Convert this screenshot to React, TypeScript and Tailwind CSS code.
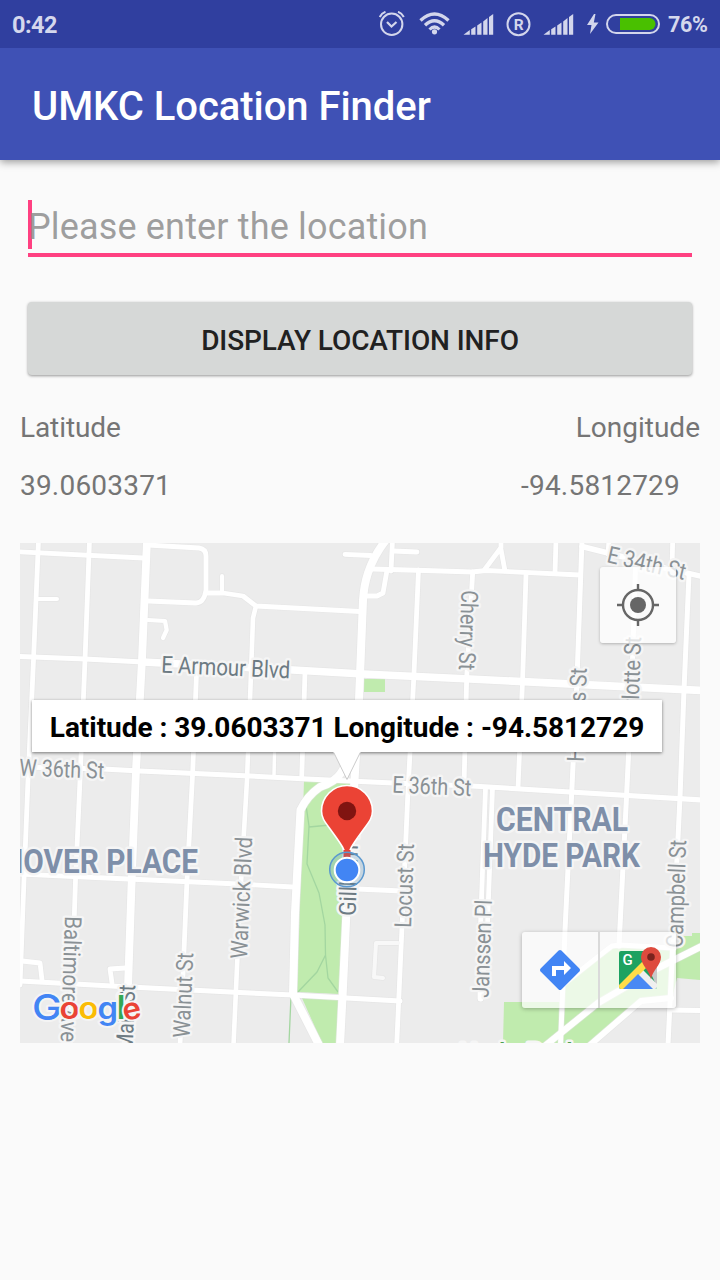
import React from "react";

type Street = { d: string; w?: number; color?: string };

const streets: Street[] = [
  { d: "M38.5 540 L33.5 660 L28 780 L24 880 L20 985" },
  { d: "M89.5 540 L85 660 L80 780 L75.5 880 L70 1045" },
  { d: "M196.7 668 L192.7 772 L187 880 L180 1045" },
  { d: "M256 606 L253 618 L250 700 L247 780 L240 900 L233.5 1045", w: 4.6 },
  { d: "M305 672 L301.7 778" },
  { d: "M275 730 L274 776", w: 3.5 },
  { d: "M392.5 540 L391 571" },
  { d: "M345 554.3 L371 555.5 M393 551 L417 552" },
  { d: "M372 569 L425 570.5 L472 572 L486 570.5 L580 575" },
  { d: "M386.7 572 L383 593 L377 596 L365 596" },
  { d: "M418.5 570 L414 673 L410 753 L407.7 797 L402 927 L396.7 1045" },
  { d: "M472.7 572 L466.7 677 L464 786" },
  { d: "M485.5 788 L480 940 L480 999 M492.5 788 L487.5 925 L481 999" },
  { d: "M526 575 L522.7 677 L518 788" },
  { d: "M556 540 L555 573" },
  { d: "M485 569 L500.7 548 L505 571 M501 540 L501 548" },
  { d: "M582 540 L576.7 687 L571.7 793 L565 930 L560.5 1045", w: 5 },
  { d: "M672.7 540 L672 568 M609 540 L608 554" },
  { d: "M635.7 560 L631.7 687 L626.7 793 L619 946", w: 5 },
  { d: "M689 574 L684 690 L680 797 L673 940 L668 1045", w: 5 },
  { d: "M582 546.5 L612 554 L665 568 L702 576.5", w: 5.5 },
  { d: "M18 656.5 L85 659 L143 662", w: 5 },
  { d: "M18 551.7 L143 558" },
  { d: "M38 599 L57 599", w: 4 },
  { d: "M148 545 L199 548 Q206 549 206 556 L206 590 Q204 603 196 603 L148 601" },
  { d: "M206 593 L223 593 L243 596 L256 606 L360 611.5" },
  { d: "M222 576 L222 593", w: 4 },
  { d: "M148 620 L165 621 L166.7 630 L163 638", w: 4.2 },
  { d: "M18 767 L103 769 L140 771 L250 776 L307 779 L393 783 L472 786 L702 800", w: 5 },
  { d: "M18 874 L128 879 L238 884 L293 887 M357 889 L402 891" },
  { d: "M18 981 L130 987 L250 993 L293 995 L400 1001", w: 5 },
  { d: "M22 961 L40 963 L42 980 M125 968 L110 969 L112 983" },
  { d: "M398 943 L376 943 L374 977 L383 978", w: 4, color: "#f8f8f8" },
  { d: "M147 540 L142 660 L136 770 L131.7 880 L126 1045", w: 7.8 },
  { d: "M143 662 L293 670 L363 674 L470 679 L702 690.5", w: 7.6 },
  { d: "M386 540 Q374 555 368 573 Q364 585 363 600 L359 700 L354 790 L347 900 L342.7 993 L340 1045", w: 8 },
  { d: "M352 754 L341 773 Q335 782 320 787 Q307 796 300.5 810 L295 913 L293 994 L319 1045", w: 8 },
  { d: "M565 983 Q600 955 612 946 L620 945 L674 948", w: 5 },
  { d: "M546 1045 L598 1003 L658 968 L702 946", w: 6.5 },
  { d: "M590 1045 L641 1001 L671 998", w: 6 },
  { d: "M670 1010 L702 1010.5", w: 5 },
];

type Label = { t: string; x: number; y: number; a: number; len: number; c?: string; s?: number; w?: number };

const labels: Label[] = [
  { t: "E Armour Blvd", x: 161, y: 672.5, a: 2.6, len: 129, c: "#6d7b83" },
  { t: "W 36th St", x: 19, y: 775.5, a: 2.2, len: 85 },
  { t: "E 36th St", x: 392, y: 792.5, a: 2.6, len: 79 },
  { t: "E 34th St", x: 606, y: 562, a: 13, len: 80 },
  { t: "Cherry St", x: 461.5, y: 590, a: 92, len: 80 },
  { t: "Holmes St", x: 583.5, y: 762, a: -88, len: 94 },
  { t: "Charlotte St", x: 637.5, y: 741, a: -88, len: 104 },
  { t: "Baltimore Ave", x: 65, y: 916, a: 92, len: 126 },
  { t: "Main St", x: 132.5, y: 1051, a: -87.5, len: 66, c: "#6d7b83" },
  { t: "Walnut St", x: 189.5, y: 1038, a: -87.5, len: 85 },
  { t: "Warwick Blvd", x: 247, y: 959, a: -87.5, len: 122 },
  { t: "Gillham Rd", x: 355.5, y: 916, a: -88, len: 101, c: "#6d7b83" },
  { t: "Locust St", x: 411, y: 928, a: -88, len: 84 },
  { t: "Janssen Pl", x: 488.5, y: 998, a: -88, len: 98 },
  { t: "Campbell St", x: 682.5, y: 948, a: -88, len: 108 },
  { t: "HANOVER PLACE", x: -39, y: 872.5, a: 0, len: 237, c: "#7e8fa9", s: 32.5, w: 700 },
  { t: "CENTRAL", x: 496, y: 830.5, a: 0, len: 132, c: "#7e8fa9", s: 32.5, w: 700 },
  { t: "HYDE PARK", x: 483, y: 866.5, a: 0, len: 157, c: "#7e8fa9", s: 32.5, w: 700 },
  { t: "Hyde Park", x: 459, y: 1063, a: 0, len: 121, c: "#4c9f50", s: 27, w: 500 },
];

const GREEN = "#c0ebae";

function StreetMap() {
  return (
    <svg className="block h-full w-full" viewBox="20 543 680 500">
      <rect x="20" y="543" width="680" height="500" fill="#ececec" />
      <g fill={GREEN}>
        <path d="M304 781 L350 782 L339 994 L297 992 Z" />
        <path d="M302 998 L338 999 L337 1043 L322 1043 Z" />
        <rect x="364" y="679" width="21" height="13" />
        <path d="M504 1002 L561 1002 L563 985 L612 947 L674 949 L682 936 L692 936 L692 933 L700 933 L700 980 L677 978 L672 998 L641 1001 L592 1043 L503 1043 Z" />
      </g>
      <path
        d="M305 798 L309 826 L307 864 L319 893 L325 925 L325.5 955 L317 972 L298 992 M325.5 955 L328 978 L338 992 M309 827 L330 825 M291 996 L289 1043"
        fill="none"
        stroke="#a3d6a0"
        strokeWidth="1.3"
      />
      <g fill="none" strokeLinecap="round" strokeLinejoin="round">
        {streets.map((s, i) => (
          <path key={i} d={s.d} stroke="#e3e3e3" strokeOpacity="0.6" strokeWidth={(s.w ?? 4.8) + 1.4} />
        ))}
        {streets.map((s, i) => (
          <path key={i} d={s.d} stroke={s.color ?? "#ffffff"} strokeWidth={s.w ?? 4.8} />
        ))}
      </g>
      <g fontFamily="Roboto, sans-serif" stroke="#f5f5f5" strokeWidth="5" strokeLinejoin="round" paintOrder="stroke">
        {labels.map((l) => (
          <text
            key={l.t}
            transform={`translate(${l.x} ${l.y}) rotate(${l.a})`}
            fontSize={l.s ?? 23.5}
            fontWeight={l.w ?? 400}
            fill={l.c ?? "#8a9195"}
            textLength={l.len}
            lengthAdjust="spacingAndGlyphs"
          >
            {l.t}
          </text>
        ))}
      </g>
      <g fontFamily="Inter, sans-serif" fontWeight="600" fontSize="30" stroke="#f4f4f4" strokeWidth="4" strokeLinejoin="round" paintOrder="stroke">
        <text x="32" y="1019.5" fontSize="36" fontWeight="500" fill="#4285f4" textLength="30" lengthAdjust="spacingAndGlyphs">G</text>
        <text x="59.5" y="1019.2" fill="#ea4335" textLength="20" lengthAdjust="spacingAndGlyphs">o</text>
        <text x="78.5" y="1019.2" fill="#fbbc05" textLength="20" lengthAdjust="spacingAndGlyphs">o</text>
        <text x="97.5" y="1019.2" fill="#4285f4" textLength="20.5" lengthAdjust="spacingAndGlyphs">g</text>
        <text x="116.8" y="1019" fontSize="33" fill="#34a853">l</text>
        <text transform="translate(124.5 1021) rotate(-12)" fill="#ea4335" textLength="18.5" lengthAdjust="spacingAndGlyphs">e</text>
      </g>
      <path
        d="M347 860 C346 851 341 844 333 833 C326 823 321.5 819 321.5 811 A25.5 25.5 0 0 1 372.5 811 C372.5 819 368 823 361 833 C353 844 348 851 347 860 Z"
        fill="#eb4335"
        stroke="#ffffff"
        strokeWidth="1.6"
      />
      <path d="M343.5 850 H350.500 V858 H343.500 Z" fill="#eb4335" />
      <circle cx="347" cy="811" r="9.2" fill="#801411" />
      <circle cx="347" cy="869.5" r="17.3" fill="#4285b4" fillOpacity="0.22" stroke="#5a98cf" strokeWidth="1.5" />
      <circle cx="347" cy="870" r="12.3" fill="#4285f4" stroke="#ffffff" strokeWidth="2" />
    </svg>
  );
}

function SignalIcon() {
  return (
    <svg className="h-6 w-8 shrink-0" viewBox="0 0 32 24" fill="#d3d6ec">
      <path d="M.5 22.8 L6.8 18 V22.8 Z M8.2 17.3 L12.5 14.5 V22.8 H8.2 Z M14.2 13.5 L18.5 10.5 V22.8 H14.2 Z M20.2 9.5 L24.5 6 V22.8 H20.2 Z M26 5 L30.2 2 V22.8 H26 Z" />
    </svg>
  );
}

function StatusBar() {
  return (
    <div className="relative flex h-12 items-center bg-[#303f9f] pl-3 text-[24px] leading-[50px] font-bold text-[#d5d8ed]">
      <span className="w-[367px] pt-[3px] text-[23.5px] leading-none tracking-[-0.5px]">0:42</span>
      <svg className="h-[26px] w-[26px] shrink-0" viewBox="0 0 26 26" fill="none" stroke="#d3d6ec">
        <circle cx="12.7" cy="13.3" r="10.7" strokeWidth="2" />
        <path d="M8 11 L12.5 15.5 L17.5 11" strokeWidth="2.2" />
        <path d="M.8 6 Q2.5 2.2 6.5 .8 M24.8 6 Q23 2.2 19 .8" strokeWidth="2" />
      </svg>
      <svg className="ml-[14px] h-6 w-8 shrink-0" viewBox="0 0 32 24" fill="none" stroke="#d3d6ec" strokeWidth="3.4">
        <path d="M1.5 8.5 Q15.5 -4.5 29.5 8.5" />
        <path d="M6 13.2 Q15.5 4.3 25 13.2" />
        <path d="M10.5 17.5 Q15.5 12.5 20.5 17.5" strokeWidth="3.1" />
        <circle cx="15.5" cy="19.8" r="2.6" fill="#d3d6ec" stroke="none" />
      </svg>
      <span className="ml-[12px] flex"><SignalIcon /></span>
      <svg className="ml-[10px] h-[26px] w-[26px] shrink-0" viewBox="0 0 26 26">
        <circle cx="13.5" cy="13.3" r="11" fill="none" stroke="#d3d6ec" strokeWidth="2" />
        <text x="13.8" y="18.8" textAnchor="middle" fontFamily="Roboto, sans-serif" fontWeight="700" fontSize="15.5" fill="#d3d6ec">R</text>
      </svg>
      <span className="ml-[12px] flex"><SignalIcon /></span>
      <svg className="ml-[12px] h-5 w-3 shrink-0" viewBox="0 0 12 20" fill="#d3d6ec">
        <path d="M7 0 L0 11 H4.5 L3 20 L11.5 8.5 H6.8 L8.5 0 Z" />
      </svg>
      <svg className="ml-[7px] h-5 w-[55px] shrink-0" viewBox="0 0 55 20">
        <rect x="1" y="1" width="52" height="18" rx="9" fill="none" stroke="#d3d6ec" strokeWidth="2" />
        <path d="M14 4 H43.5 A6 6 0 0 1 43.5 16 H14 Z" fill="#49c000" />
      </svg>
      <span className="ml-[7px] pt-[2px] text-[21.5px] leading-none tracking-[-0.3px]">76%</span>
    </div>
  );
}

function MapPanel() {
  return (
    <section className="relative mx-5 mt-[38px] h-[500px] overflow-hidden">
      <StreetMap />
      <div className="absolute top-[24px] left-[580px] flex h-[76px] w-[76px] items-center justify-center rounded-[3px] bg-white/75 shadow-[0_1px_3px_rgba(0,0,0,0.25)]">
        <svg className="h-[42px] w-[42px]" viewBox="0 0 42 42" fill="none" stroke="#666666" strokeWidth="2.4">
          <circle cx="21" cy="21" r="15" />
          <path d="M21 0 V6 M21 36 V42 M0 21 H6 M36 21 H42" />
          <circle cx="21" cy="21" r="8" fill="#666666" stroke="none" />
        </svg>
      </div>
      <div className="absolute top-[157px] left-[12px] flex h-[52px] w-[630px] items-center justify-center bg-white pt-[3px] text-[28px] leading-[52px] font-bold tracking-[-0.04px] whitespace-nowrap text-black shadow-[0_1px_3px_rgba(0,0,0,0.5)]">
        <span>Latitude : 39.0603371 Longitude : -94.5812729</span>
        <svg className="absolute top-[51px] left-[300px] h-8 w-[30px]" viewBox="0 0 30 32">
          <path d="M1.5 1 L15 28.5 L28.5 1" fill="#ffffff" stroke="#cccccc" strokeWidth="1" />
          <path d="M2 0 H28 V1.5 H2 Z" fill="#ffffff" />
        </svg>
      </div>
      <div className="absolute top-[389px] left-[502px] flex h-[76px] w-[154px] rounded-[3px] bg-white/70 shadow-[0_1px_4px_rgba(0,0,0,0.28)]">
        <button className="flex w-[76px] items-center justify-center">
          <svg className="h-10 w-10" viewBox="0 0 40 40">
            <path d="M18.6 .6 Q20 -.6 21.4 .6 L39.4 18.6 Q40.6 20 39.4 21.4 L21.4 39.4 Q20 40.6 18.6 39.4 L.6 21.4 Q-.6 20 .6 18.6 Z" fill="#4285f4" />
            <path d="M12 26 V16 H24 V11 L31 18 L24 25 V20 H16 V26 Z" fill="#ffffff" />
          </svg>
        </button>
        <span className="w-[2px] bg-[#dadada]" />
        <button className="flex flex-1 items-center justify-center">
          <svg className="mb-[4px] ml-[3px] h-[44px] w-[44px]" viewBox="0 0 44 44">
            <defs>
              <clipPath id="tile"><rect x="1" y="5" width="38" height="38" rx="2" /></clipPath>
            </defs>
            <g clipPath="url(#tile)">
              <rect x="1" y="5" width="38" height="38" fill="#1da261" />
              <path d="M28 17 L40 5 V43 Z" fill="#c9c9c9" />
              <path d="M17 27 L23 22 L40 39 V43 H34 Z" fill="#efefef" />
              <path d="M0 40 L28 12 L33 17 L4 46 Z" fill="#ffdc48" />
              <path d="M20 28 L35 43 H5 Z" fill="#4889f4" />
              <text x="4.5" y="19" fontFamily="Roboto, sans-serif" fontWeight="500" fontSize="15" fill="#ffffff">G</text>
            </g>
            <path d="M33 33.5 C32 25 23 19 23 11 A10 10 0 0 1 43 11 C43 19 34 25 33 33.5 Z" fill="#de4b3e" />
            <circle cx="33" cy="11" r="3.8" fill="#7b231e" />
          </svg>
        </button>
      </div>
    </section>
  );
}

export default function App() {
  return (
    <div className="h-[1280px] w-[720px] overflow-hidden bg-[#fafafa] font-['Roboto',sans-serif]">
      <StatusBar />
      <header className="flex h-[112px] items-center bg-[#3f51b5] pt-[6px] pl-8 text-[40px] font-medium tracking-[-0.04px] text-white shadow-[0_2px_8px_rgba(0,0,0,0.4)]">
        <h1 className="whitespace-nowrap">UMKC Location Finder</h1>
      </header>
      <main>
        <div className="mx-7 mt-10 flex h-[57px] items-start border-b-4 border-[#ff4081]">
          <span className="h-[49px] w-1 bg-[#ff4081]" />
          <span className="-ml-1 pt-[5px] text-[36px] leading-[44px] tracking-[0.16px] text-[#808080]/75">Please enter the location</span>
        </div>
        <button className="mx-7 mt-[45px] flex h-[73px] w-[664px] items-center justify-center rounded-[4px] bg-[#d6d8d7] pt-[4px] text-[28px] font-medium tracking-[-0.1px] text-[#212121] shadow-[0_1px_3px_rgba(0,0,0,0.4)]">
          DISPLAY LOCATION INFO
        </button>
        <div className="mt-[34px] flex justify-between px-5 text-[28px] leading-[38px] text-[#757575]">
          <span className="tracking-[-0.1px]">Latitude</span>
          <span>Longitude</span>
        </div>
        <div className="mt-5 flex justify-between pr-10 pl-5 text-[28px] leading-[38px] tracking-[0.2px] text-[#757575]">
          <span>39.0603371</span>
          <span>-94.5812729</span>
        </div>
        <MapPanel />
      </main>
    </div>
  );
}
